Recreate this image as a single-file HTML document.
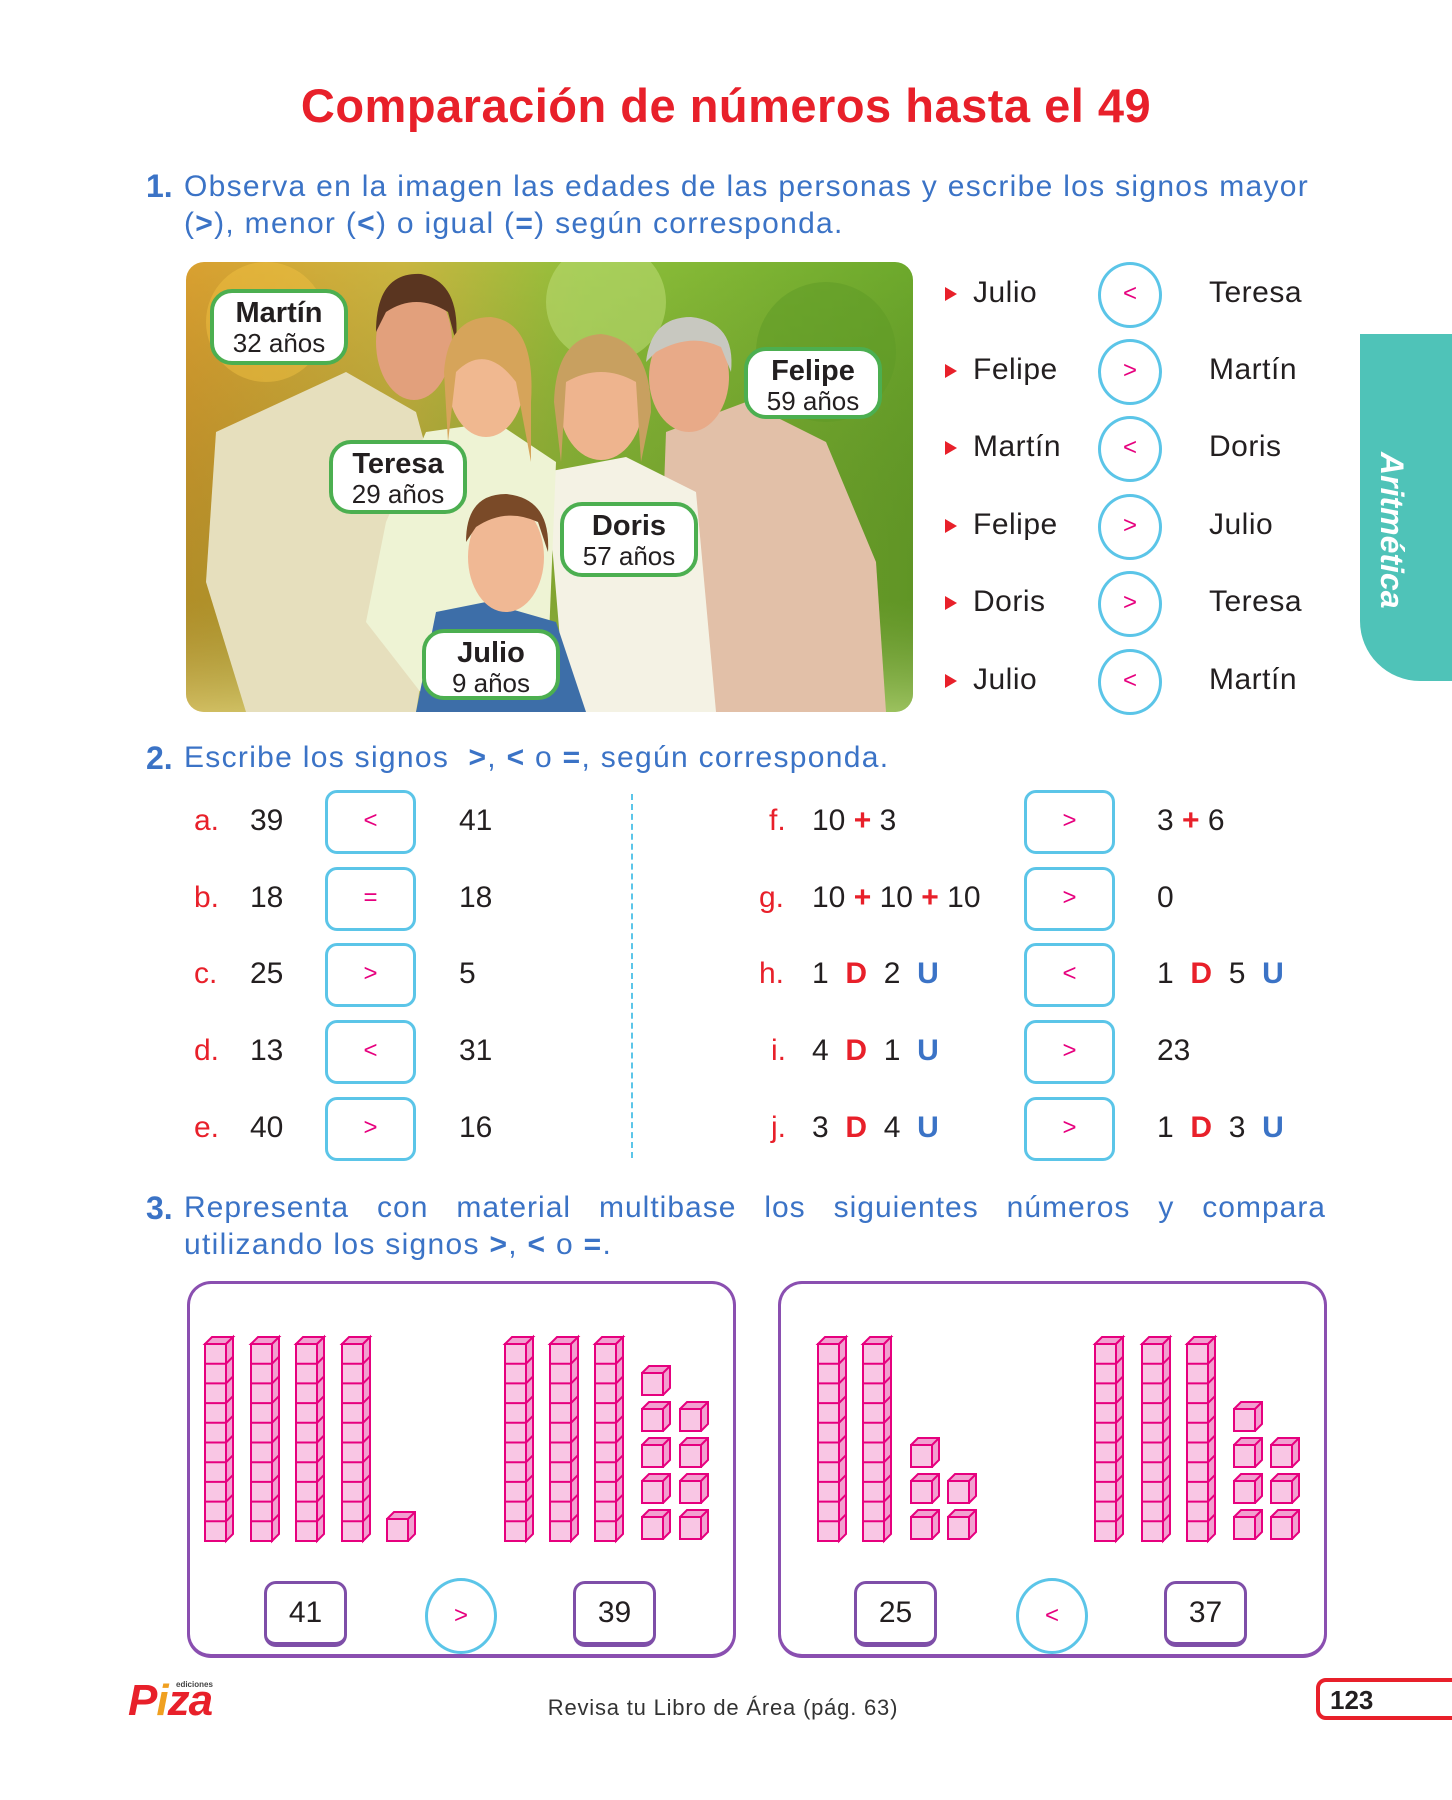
<!DOCTYPE html>
<html><head><meta charset="utf-8"><style>
*{margin:0;padding:0;box-sizing:border-box}
body{width:1452px;height:1800px;background:#fff;position:relative;overflow:hidden;font-family:"Liberation Sans",sans-serif;color:#231f20}
.a{position:absolute;white-space:nowrap}
.t{left:0;width:1452px;text-align:center;top:78px;font-size:47px;font-weight:bold;color:#e8202a;letter-spacing:0.5px}
.q{font-size:30px;color:#3b73c6;letter-spacing:1.3px}
.qn{font-weight:bold;color:#3b73c6;font-size:32px}
.lbl{position:absolute;background:#fff;border:4px solid #4caf50;border-radius:22px;text-align:center;line-height:1;font-size:26px;padding-top:6px}
.lbl b{display:block;font-size:29px;margin-bottom:2px}
.row{font-size:30px;letter-spacing:0.5px}
.tri{width:0;height:0;border-left:12px solid #e8202a;border-top:7px solid transparent;border-bottom:7px solid transparent}
.cir{width:64px;height:66px;border:3px solid #5bc5e8;border-radius:50%;color:#e6007e;text-align:center;line-height:58px;font-size:24px}
.box{width:91px;height:64px;border:3px solid #5bc5e8;border-radius:12px;color:#e6007e;text-align:center;line-height:56px;font-size:24px}
.L{color:#e8202a;font-size:30px}
.N{font-size:30px}
.r{color:#e8202a;font-weight:bold}
.b{color:#3b73c6;font-weight:bold}
.nb{width:83px;height:66px;border:3px solid #7e4ea8;border-bottom-width:5px;border-radius:12px;text-align:center;line-height:58px;font-size:30px}
</style></head><body>
<div class="a t">Comparación de números hasta el 49</div>
<div class="a qn" style="left:146px;top:168px">1.</div>
<div class="a q" style="left:184px;top:170px">Observa en la imagen las edades de las personas y escribe los signos mayor</div>
<div class="a q" style="left:184px;top:207px">(<b>&gt;</b>), menor (<b>&lt;</b>) o igual (<b>=</b>) según corresponda.</div>

<svg class="a" style="left:186px;top:262px;border-radius:18px" width="727" height="450" viewBox="0 0 727 450">
<defs><linearGradient id="bg" x1="0" x2="1"><stop offset="0" stop-color="#d9a030"/><stop offset="0.3" stop-color="#c9b540"/><stop offset="0.55" stop-color="#8fbf3a"/><stop offset="1" stop-color="#6da92c"/></linearGradient>
<linearGradient id="gr" y1="0" y2="1" x1="0" x2="0"><stop offset="0" stop-color="#000" stop-opacity="0"/><stop offset="0.75" stop-color="#3a5a10" stop-opacity="0.25"/><stop offset="1" stop-color="#c8d890" stop-opacity="0.5"/></linearGradient></defs>
<rect width="727" height="450" fill="url(#bg)"/>
<rect width="727" height="450" fill="url(#gr)"/>
<circle cx="420" cy="40" r="60" fill="#b9d870" opacity=".6"/><circle cx="640" cy="90" r="70" fill="#5d9a25" opacity=".5"/><circle cx="80" cy="60" r="60" fill="#f0c040" opacity=".5"/>
<path d="M480 170 L560 140 L640 180 L690 300 L700 450 L470 450 Z" fill="#e2c0a8"/>
<path d="M30 170 L160 110 L230 150 L260 260 L230 450 L60 450 L20 320 Z" fill="#e6dfbd"/>
<path d="M360 210 L440 195 L510 230 L530 450 L380 450 Z" fill="#f4f2e4"/>
<path d="M240 170 L310 160 L370 200 L360 450 L250 450 L180 360 L200 260 Z" fill="#eef3d4"/>
<path d="M250 350 L300 340 L370 360 L400 450 L230 450 Z" fill="#3d6ea8"/>
<ellipse cx="228" cy="80" rx="38" ry="58" fill="#e2a07c"/><path d="M190 70 Q190 10 235 12 Q275 20 270 80 L262 50 Q230 30 200 50 Z" fill="#5a3520"/>
<ellipse cx="300" cy="120" rx="38" ry="55" fill="#f0b890"/><path d="M258 110 Q262 55 305 55 Q350 60 345 140 L345 200 L330 120 Q300 80 270 110 L262 180 Z" fill="#d6a45a"/>
<ellipse cx="415" cy="140" rx="42" ry="58" fill="#eeb48e"/><path d="M368 140 Q370 75 415 72 Q465 78 465 150 L455 200 L450 120 Q415 100 380 120 L375 200 Z" fill="#c8a060"/>
<ellipse cx="503" cy="115" rx="40" ry="55" fill="#e8aa88"/><path d="M460 100 Q465 55 505 55 Q550 60 545 110 L535 85 Q505 70 470 90 Z" fill="#c8c8c0"/>
<ellipse cx="320" cy="295" rx="38" ry="55" fill="#f0b894"/><path d="M280 280 Q280 232 320 232 Q365 236 362 290 L352 260 Q320 245 290 265 Z" fill="#7a4a28"/>
</svg>
<div class="lbl" style="left:210px;top:289px;width:138px;height:76px"><b>Martín</b>32 años</div>
<div class="lbl" style="left:744px;top:347px;width:138px;height:72px"><b>Felipe</b>59 años</div>
<div class="lbl" style="left:329px;top:440px;width:138px;height:74px"><b>Teresa</b>29 años</div>
<div class="lbl" style="left:560px;top:502px;width:138px;height:75px"><b>Doris</b>57 años</div>
<div class="lbl" style="left:422px;top:629px;width:138px;height:71px"><b>Julio</b>9 años</div>

<div class="a tri" style="left:945px;top:287px"></div><div class="a row" style="left:973px;top:276px">Julio</div><div class="a cir" style="left:1098px;top:262px">&lt;</div><div class="a row" style="left:1209px;top:276px">Teresa</div>
<div class="a tri" style="left:945px;top:364px"></div><div class="a row" style="left:973px;top:353px">Felipe</div><div class="a cir" style="left:1098px;top:339px">&gt;</div><div class="a row" style="left:1209px;top:353px">Martín</div>
<div class="a tri" style="left:945px;top:441px"></div><div class="a row" style="left:973px;top:430px">Martín</div><div class="a cir" style="left:1098px;top:416px">&lt;</div><div class="a row" style="left:1209px;top:430px">Doris</div>
<div class="a tri" style="left:945px;top:519px"></div><div class="a row" style="left:973px;top:508px">Felipe</div><div class="a cir" style="left:1098px;top:494px">&gt;</div><div class="a row" style="left:1209px;top:508px">Julio</div>
<div class="a tri" style="left:945px;top:596px"></div><div class="a row" style="left:973px;top:585px">Doris</div><div class="a cir" style="left:1098px;top:571px">&gt;</div><div class="a row" style="left:1209px;top:585px">Teresa</div>
<div class="a tri" style="left:945px;top:674px"></div><div class="a row" style="left:973px;top:663px">Julio</div><div class="a cir" style="left:1098px;top:649px">&lt;</div><div class="a row" style="left:1209px;top:663px">Martín</div>

<div class="a" style="left:1360px;top:334px;width:92px;height:347px;background:#4fc3b8;border-radius:0 0 0 60px"></div>
<div class="a" style="top:452px;transform:rotate(90deg);transform-origin:0 0;left:1410px;color:#fff;font-weight:bold;font-style:italic;font-size:32px">Aritmética</div>

<div class="a qn" style="left:146px;top:740px">2.</div>
<div class="a q" style="left:184px;top:741px">Escribe los signos &nbsp;<b>&gt;</b>, <b>&lt;</b> o <b>=</b>, según corresponda.</div>
<div class="a" style="left:631px;top:794px;height:364px;border-left:2px dashed #5bc5e8"></div>

<div class="a L" style="left:194px;top:804px">a.</div><div class="a N" style="left:250px;top:804px">39</div><div class="a box" style="left:325px;top:790px">&lt;</div><div class="a N" style="left:459px;top:804px">41</div>
<div class="a L" style="left:194px;top:881px">b.</div><div class="a N" style="left:250px;top:881px">18</div><div class="a box" style="left:325px;top:867px">=</div><div class="a N" style="left:459px;top:881px">18</div>
<div class="a L" style="left:194px;top:957px">c.</div><div class="a N" style="left:250px;top:957px">25</div><div class="a box" style="left:325px;top:943px">&gt;</div><div class="a N" style="left:459px;top:957px">5</div>
<div class="a L" style="left:194px;top:1034px">d.</div><div class="a N" style="left:250px;top:1034px">13</div><div class="a box" style="left:325px;top:1020px">&lt;</div><div class="a N" style="left:459px;top:1034px">31</div>
<div class="a L" style="left:194px;top:1111px">e.</div><div class="a N" style="left:250px;top:1111px">40</div><div class="a box" style="left:325px;top:1097px">&gt;</div><div class="a N" style="left:459px;top:1111px">16</div>

<div class="a L" style="left:769px;top:804px">f.</div><div class="a N" style="left:812px;top:804px">10 <span class="r">+</span> 3</div><div class="a box" style="left:1024px;top:790px">&gt;</div><div class="a N" style="left:1157px;top:804px">3 <span class="r">+</span> 6</div>
<div class="a L" style="left:759px;top:881px">g.</div><div class="a N" style="left:812px;top:881px">10 <span class="r">+</span> 10 <span class="r">+</span> 10</div><div class="a box" style="left:1024px;top:867px">&gt;</div><div class="a N" style="left:1157px;top:881px">0</div>
<div class="a L" style="left:759px;top:957px">h.</div><div class="a N" style="left:812px;top:957px">1 &nbsp;<span class="r">D</span> &nbsp;2 &nbsp;<span class="b">U</span></div><div class="a box" style="left:1024px;top:943px">&lt;</div><div class="a N" style="left:1157px;top:957px">1 &nbsp;<span class="r">D</span> &nbsp;5 &nbsp;<span class="b">U</span></div>
<div class="a L" style="left:771px;top:1034px">i.</div><div class="a N" style="left:812px;top:1034px">4 &nbsp;<span class="r">D</span> &nbsp;1 &nbsp;<span class="b">U</span></div><div class="a box" style="left:1024px;top:1020px">&gt;</div><div class="a N" style="left:1157px;top:1034px">23</div>
<div class="a L" style="left:771px;top:1111px">j.</div><div class="a N" style="left:812px;top:1111px">3 &nbsp;<span class="r">D</span> &nbsp;4 &nbsp;<span class="b">U</span></div><div class="a box" style="left:1024px;top:1097px">&gt;</div><div class="a N" style="left:1157px;top:1111px">1 &nbsp;<span class="r">D</span> &nbsp;3 &nbsp;<span class="b">U</span></div>

<div class="a qn" style="left:146px;top:1190px">3.</div>
<div class="a q" style="left:184px;top:1191px;width:1142px;text-align:justify;text-align-last:justify;letter-spacing:1px">Representa con material multibase los siguientes números y compara</div>
<div class="a q" style="left:184px;top:1228px">utilizando los signos <b>&gt;</b>, <b>&lt;</b> o <b>=</b>.</div>

<div class="a" style="left:187px;top:1281px;width:549px;height:377px;border:3px solid #8a4fb0;border-bottom-width:4px;border-radius:24px"></div>
<div class="a" style="left:778px;top:1281px;width:549px;height:377px;border:3px solid #8a4fb0;border-bottom-width:4px;border-radius:24px"></div>
<svg id="blk" class="a" style="left:0;top:0" width="1452" height="1800"></svg>

<div class="a nb" style="left:264px;top:1581px">41</div>
<div class="a cir" style="left:425px;top:1578px;width:72px;height:76px;line-height:70px">&gt;</div>
<div class="a nb" style="left:573px;top:1581px">39</div>
<div class="a nb" style="left:854px;top:1581px">25</div>
<div class="a cir" style="left:1016px;top:1578px;width:72px;height:76px;line-height:70px">&lt;</div>
<div class="a nb" style="left:1164px;top:1581px">37</div>

<div class="a" style="left:128px;top:1676px;font-size:44px;font-weight:bold;color:#e8202a;letter-spacing:-1px;font-style:italic">P<span style="color:#f0a020">i</span>za</div>
<div class="a" style="left:176px;top:1680px;font-size:8px;font-weight:bold;color:#444">ediciones</div>
<div class="a" style="left:0;width:1446px;text-align:center;top:1695px;font-size:22px;color:#333;letter-spacing:0.8px">Revisa tu Libro de Área (pág. 63)</div>
<div class="a" style="left:1316px;top:1678px;width:150px;height:42px;border:4px solid #e8202a;border-radius:10px;font-weight:bold;font-size:26px;padding:3px 0 0 10px">123</div>

<script>
var s=document.getElementById('blk'),h='';
var P='#e6007e',F='#f9c6e4',S='#f2a0d0';
function rod(x){var y0=1337,y1=1541,w=21,o=7;
h+='<polygon points="'+x+','+(y0+o)+' '+(x+o)+','+y0+' '+(x+w+o)+','+y0+' '+(x+w)+','+(y0+o)+'" fill="'+S+'" stroke="'+P+'" stroke-width="2"/>';
h+='<polygon points="'+(x+w)+','+(y0+o)+' '+(x+w+o)+','+y0+' '+(x+w+o)+','+(y1-o)+' '+(x+w)+','+y1+'" fill="'+S+'" stroke="'+P+'" stroke-width="2"/>';
h+='<rect x="'+x+'" y="'+(y0+o)+'" width="'+w+'" height="'+(y1-y0-o)+'" fill="'+F+'" stroke="'+P+'" stroke-width="2"/>';
var c=(y1-y0-o)/10;for(var i=1;i<10;i++){var yy=y0+o+c*i;h+='<line x1="'+x+'" y1="'+yy+'" x2="'+(x+w)+'" y2="'+yy+'" stroke="'+P+'" stroke-width="2"/><line x1="'+(x+w)+'" y1="'+yy+'" x2="'+(x+w+o)+'" y2="'+(yy-o)+'" stroke="'+P+'" stroke-width="2"/>';}}
function u(x,y){var w=21,o=7,hh=22;
h+='<polygon points="'+x+','+(y+o)+' '+(x+o)+','+y+' '+(x+w+o)+','+y+' '+(x+w+o)+','+(y+hh)+' '+(x+w)+','+(y+o+hh)+' '+x+','+(y+o+hh)+'" fill="'+S+'" stroke="'+P+'" stroke-width="2"/>';
h+='<rect x="'+x+'" y="'+(y+o)+'" width="'+w+'" height="'+hh+'" fill="'+F+'" stroke="'+P+'" stroke-width="2"/><line x1="'+(x+w)+'" y1="'+(y+o)+'" x2="'+(x+w+o)+'" y2="'+y+'" stroke="'+P+'" stroke-width="2"/>';}
[205,251,296,342,505,550,595,818,863,1095,1142,1187].forEach(rod);
u(387,1512);u(642,1366);[1402,1438,1474,1510].forEach(function(y){u(642,y);u(680,y)});
u(911,1438);[1474,1510].forEach(function(y){u(911,y);u(948,y)});
u(1234,1402);[1438,1474,1510].forEach(function(y){u(1234,y);u(1271,y)});
s.innerHTML=h;
</script>
</body></html>
